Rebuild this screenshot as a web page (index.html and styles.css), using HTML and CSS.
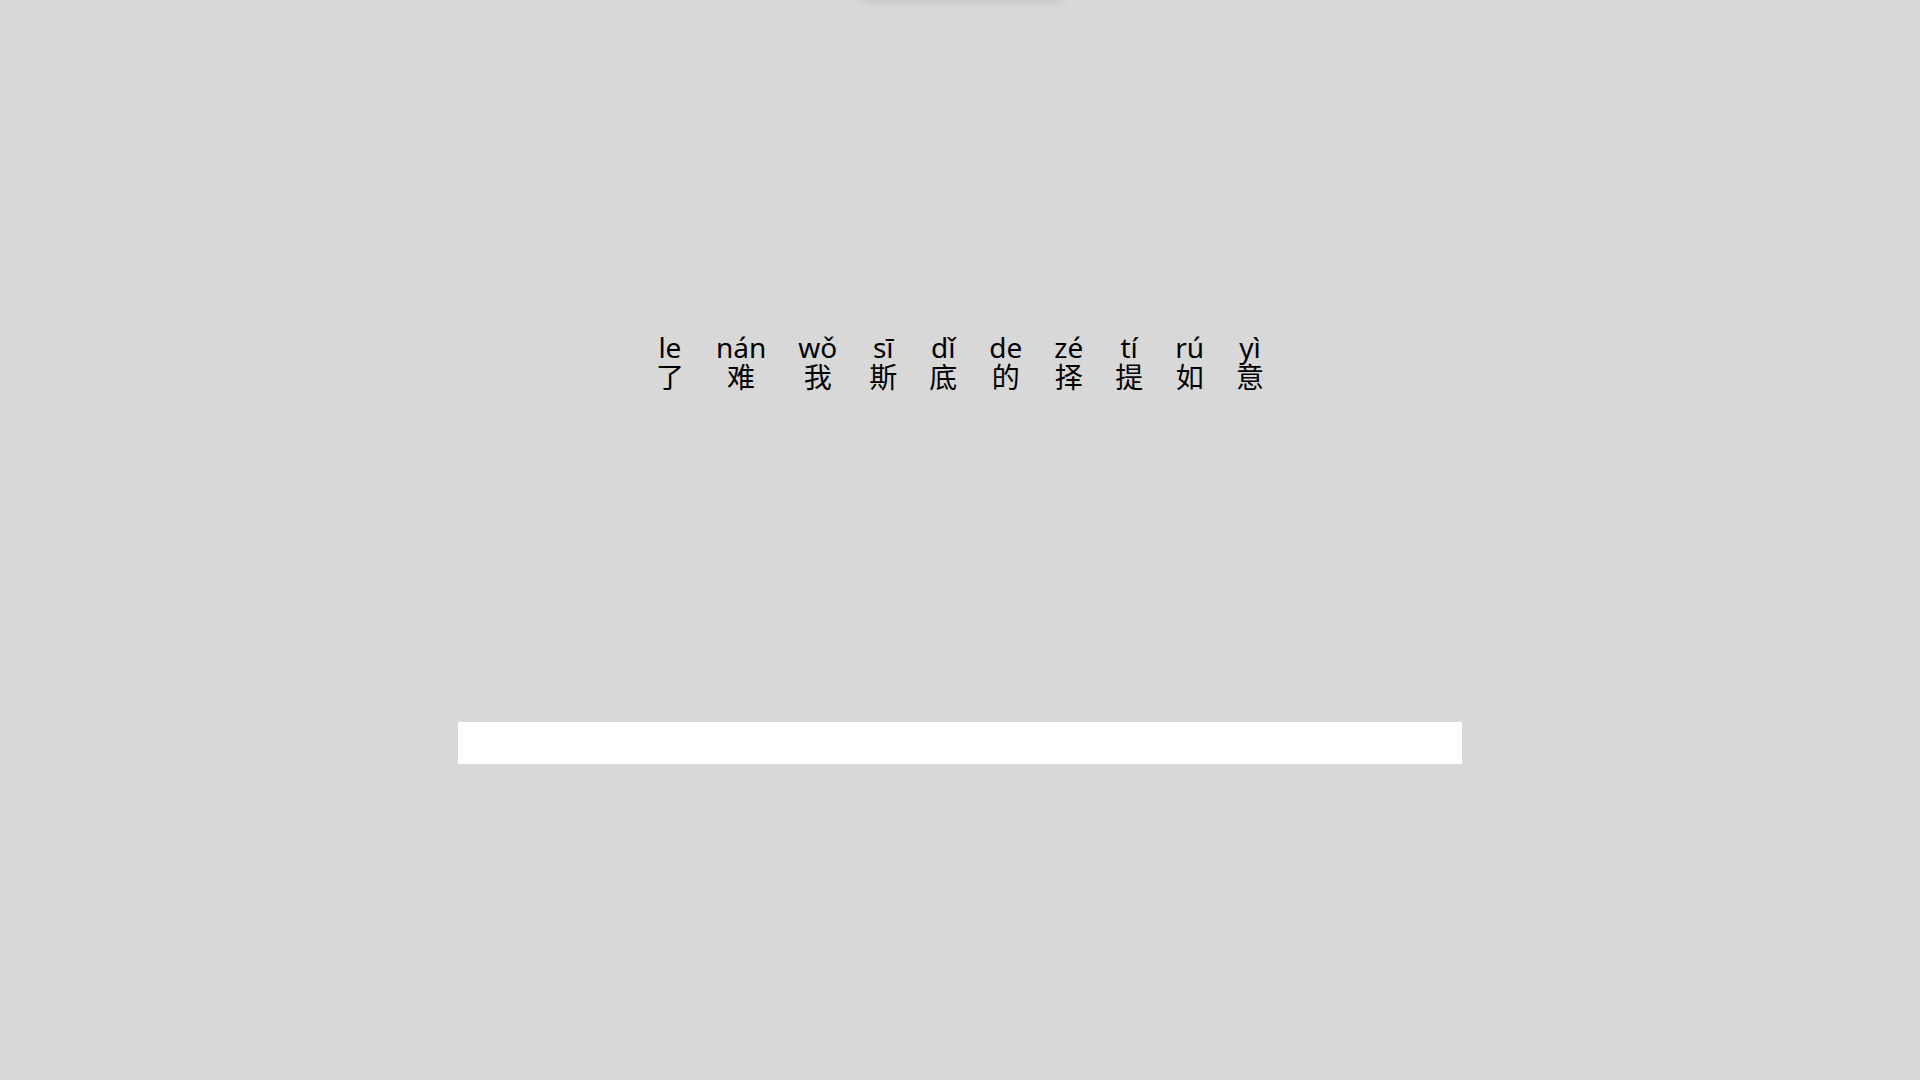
FILE: index.html
```html
<!DOCTYPE html>
<html lang="zh">
<head>
<meta charset="utf-8">
<title>Pinyin</title>
<link rel="stylesheet" href="styles.css">
</head>
<body>
<div class="top-shade"></div>
<main class="stage">
  <div class="sentence">
    <div class="word"><span class="py">le</span><span class="hz">了</span></div>
    <div class="word"><span class="py">nán</span><span class="hz">难</span></div>
    <div class="word"><span class="py">wǒ</span><span class="hz">我</span></div>
    <div class="word"><span class="py">sī</span><span class="hz">斯</span></div>
    <div class="word"><span class="py">dǐ</span><span class="hz">底</span></div>
    <div class="word"><span class="py">de</span><span class="hz">的</span></div>
    <div class="word"><span class="py">zé</span><span class="hz">择</span></div>
    <div class="word"><span class="py">tí</span><span class="hz">提</span></div>
    <div class="word"><span class="py">rú</span><span class="hz">如</span></div>
    <div class="word"><span class="py">yì</span><span class="hz">意</span></div>
  </div>
  <div class="answer"></div>
</main>
</body>
</html>
```
FILE: styles.css
```css
html, body {
  margin: 0;
  padding: 0;
  height: 100%;
}
body {
  background: #d8d8d8;
  font-family: "Noto Sans", "Noto Sans CJK SC", sans-serif;
  color: #000;
  overflow: hidden;
  position: relative;
}
.top-shade {
  position: absolute;
  top: -40px;
  left: 863px;
  width: 200px;
  height: 40px;
  background: #d8d8d8;
  box-shadow: 0 0 10px rgba(0, 0, 0, 0.12);
}
.stage {
  display: flex;
  flex-direction: column;
  align-items: center;
  padding-top: 333px;
}
.sentence {
  display: flex;
  justify-content: center;
}
.word {
  display: flex;
  flex-direction: column;
  align-items: center;
  padding: 0 16px;
  font-size: 28px;
}
.py {
  display: block;
  line-height: 28px;
}
.hz {
  display: block;
  line-height: 32px;
}
.answer {
  margin-top: 329px;
  width: 1004px;
  height: 42px;
  background: #fff;
}
```
